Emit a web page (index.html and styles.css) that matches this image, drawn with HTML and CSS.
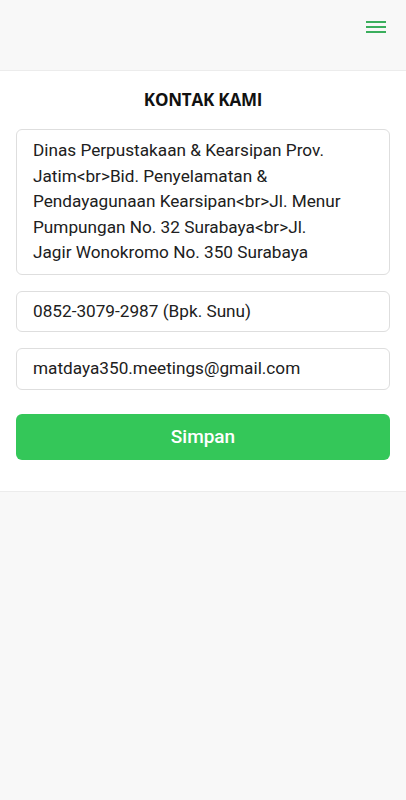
FILE: index.html
```html
<!DOCTYPE html>
<html>
<head>
<meta charset="utf-8">
<link rel="stylesheet" href="styles.css">
</head>
<body>
<header class="topbar">
  <svg class="menu" width="20" height="14" viewBox="0 0 20 14">
    <rect x="0" y="1" width="20" height="2" fill="#3bae5d"/>
    <rect x="0" y="6" width="20" height="2" fill="#3bae5d"/>
    <rect x="0" y="11" width="20" height="2" fill="#3bae5d"/>
  </svg>
</header>
<main class="card">
  <h1 class="title">KONTAK KAMI</h1>
  <div class="field area">Dinas Perpustakaan &amp; Kearsipan Prov. Jatim&lt;br&gt;Bid. Penyelamatan &amp; Pendayagunaan Kearsipan&lt;br&gt;Jl. Menur Pumpungan No. 32 Surabaya&lt;br&gt;Jl. Jagir Wonokromo No. 350 Surabaya</div>
  <div class="field">0852-3079-2987 (Bpk. Sunu)</div>
  <div class="field">matdaya350.meetings@gmail.com</div>
  <button class="save">Simpan</button>
</main>
</body>
</html>
```
FILE: styles.css
```css
html, body {
  margin: 0;
  padding: 0;
  background: #f8f8f8;
}
body {
  font-family: Roboto, "Noto Sans", sans-serif;
  width: 406px;
  min-height: 800px;
}
.topbar {
  height: 70px;
  display: flex;
  justify-content: flex-end;
  align-items: flex-start;
  padding: 20px 20px 0 0;
  box-sizing: border-box;
  background: #f8f8f8;
}
.menu {
  display: block;
}
.card {
  background: #fff;
  border-top: 1px solid #ececec;
  border-bottom: 1px solid #ececec;
  padding: 16px 16px 31px;
  display: flex;
  flex-direction: column;
  gap: 16px;
}
.title {
  margin: 0;
  text-align: center;
  font-family: "Open Sans", sans-serif;
  font-weight: 700;
  font-size: 17px;
  line-height: 26px;
  color: #111;
  letter-spacing: -0.2px;
}
.field {
  border: 1px solid #dedede;
  border-radius: 6px;
  padding: 7px 16px;
  font-size: 17.2px;
  line-height: 25.5px;
  color: #202020;
  background: #fff;
}
.field.area {
  padding: 8px 40px 8px 16px;
}
.save {
  margin-top: 8px;
  height: 46px;
  border: none;
  border-radius: 6px;
  background: #34c759;
  color: #fff;
  font-family: Roboto, sans-serif;
  font-weight: 500;
  font-size: 19px;
}
```
